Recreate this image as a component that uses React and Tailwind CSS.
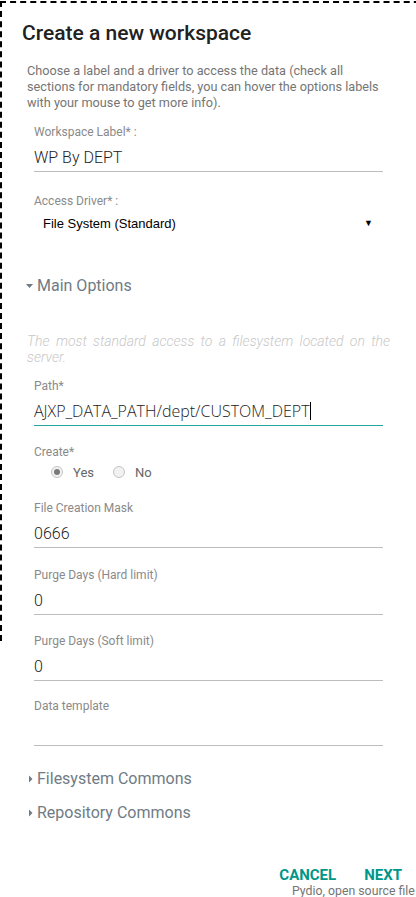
import React from 'react';

const Field = ({ label, value, focused, cursor, big, className = '' }) => (
  <div className={`px-[7px] ${className}`}>
    <div className="text-[12px] leading-[16px] text-[#8a8a8a]">{label}</div>
    <div
      className={`mt-[6px] h-[26px] flex items-end pb-[3px] border-b ${
        focused ? 'border-[#26a69a]' : 'border-[#bdbdbd]'
      }`}
    >
      <span
        className={
          big
            ? "text-[16px] leading-[22px] text-[#222] font-light font-['Open_Sans',sans-serif]"
            : 'text-[16px] leading-[20px] font-light text-[#222]'
        }
      >
        {value}
      </span>
      {cursor && <span className="inline-block w-[1px] h-[18px] bg-black mb-[2px]" />}
    </div>
  </div>
);

const Section = ({ title, open, className = '' }) => (
  <div className={`flex items-center text-[16px] leading-[20px] text-[#6f7b85] ${className}`}>
    {open ? (
      <svg width="13" height="8" viewBox="0 0 13 8" className="ml-[2px]">
        <path d="M2 2 L9 2 L5.5 6 Z" fill="#6f7b85" />
      </svg>
    ) : (
      <svg width="13" height="10" viewBox="0 0 13 10" className="ml-[2px]">
        <path d="M5 1.5 L8.5 5 L5 8.5 Z" fill="#6f7b85" />
      </svg>
    )}
    <span>{title}</span>
  </div>
);

const Radio = ({ checked, label }) => (
  <label className="flex items-center gap-[10px] text-[13px] text-[#666]">
    <span className="w-[12px] h-[12px] rounded-full border border-[#c4c4c4] bg-[#f2f2f2] flex items-center justify-center">
      {checked && <span className="w-[6px] h-[6px] rounded-full bg-[#7a7a7a]" />}
    </span>
    {label}
  </label>
);

export default function App() {
  return (
    <div className="relative w-[416px] h-[897px] overflow-hidden bg-white font-['Roboto',sans-serif]">
      <div className="absolute left-0 top-[1px] w-[440px] h-[640px] border-l-2 border-t-2 border-dashed border-black" />

      <div className="relative pl-[22px] pt-[20px]">
        <h1 className="text-[21px] leading-[26px] font-medium text-[#212121]">Create a new workspace</h1>
      </div>

      <div className="relative pl-[27px] pr-[26px] pt-[17px]">
        <p className="text-[12.7px] leading-[16px] text-[#757575]">
          Choose a label and a driver to access the data (check all sections for mandatory fields, you can
          hover the options labels with your mouse to get more info).
        </p>

        <Field label="Workspace Label* :" value="WP By DEPT" className="mt-[13px]" />

        <div className="px-[7px] mt-[21px]">
          <div className="text-[12px] leading-[16px] text-[#8a8a8a]">Access Driver* :</div>
          <div className="mt-[5px] pl-[9px] pr-[10px] flex items-center justify-between font-['Liberation_Sans',sans-serif] text-[13px] text-black">
            <span>File System (Standard)</span>
            <span className="text-[9px]">▼</span>
          </div>
        </div>

        <Section title="Main Options" open className="mt-[42px] -ml-[5px]" />

        <p className="mt-[37px] text-[14px] leading-[16px] text-[#c8c8c8] italic font-light text-justify">
          The most standard access to a filesystem located on the server.
        </p>

        <Field label="Path*" value="AJXP_DATA_PATH/dept/CUSTOM_DEPT" big focused cursor className="mt-[13px]" />

        <div className="px-[7px] mt-[18px]">
          <div className="text-[12px] leading-[16px] text-[#8a8a8a]">Create*</div>
          <div className="mt-[3px] pl-[17px] flex items-center gap-[19px]">
            <Radio checked label="Yes" />
            <Radio label="No" />
          </div>
        </div>

        <Field label="File Creation Mask" value="0666" className="mt-[18px]" />
        <Field label="Purge Days (Hard limit)" value="0" className="mt-[19px]" />
        <Field label="Purge Days (Soft limit)" value="0" className="mt-[18px]" />
        <Field label="Data template" value="" className="mt-[17px]" />

        <Section title="Filesystem Commons" className="mt-[23px] -ml-[5px]" />
        <Section title="Repository Commons" className="mt-[14px] -ml-[5px]" />
      </div>

      <div className="relative flex justify-end pr-[14px] mt-[43px] gap-[28px] text-[15px] leading-[18px] font-bold text-[#009688]">
        <span>CANCEL</span>
        <span>NEXT</span>
      </div>
      <div className="relative pl-[292px] text-[12.3px] leading-[15px] text-[#757575] whitespace-nowrap">
        Pydio, open source file
      </div>
    </div>
  );
}
